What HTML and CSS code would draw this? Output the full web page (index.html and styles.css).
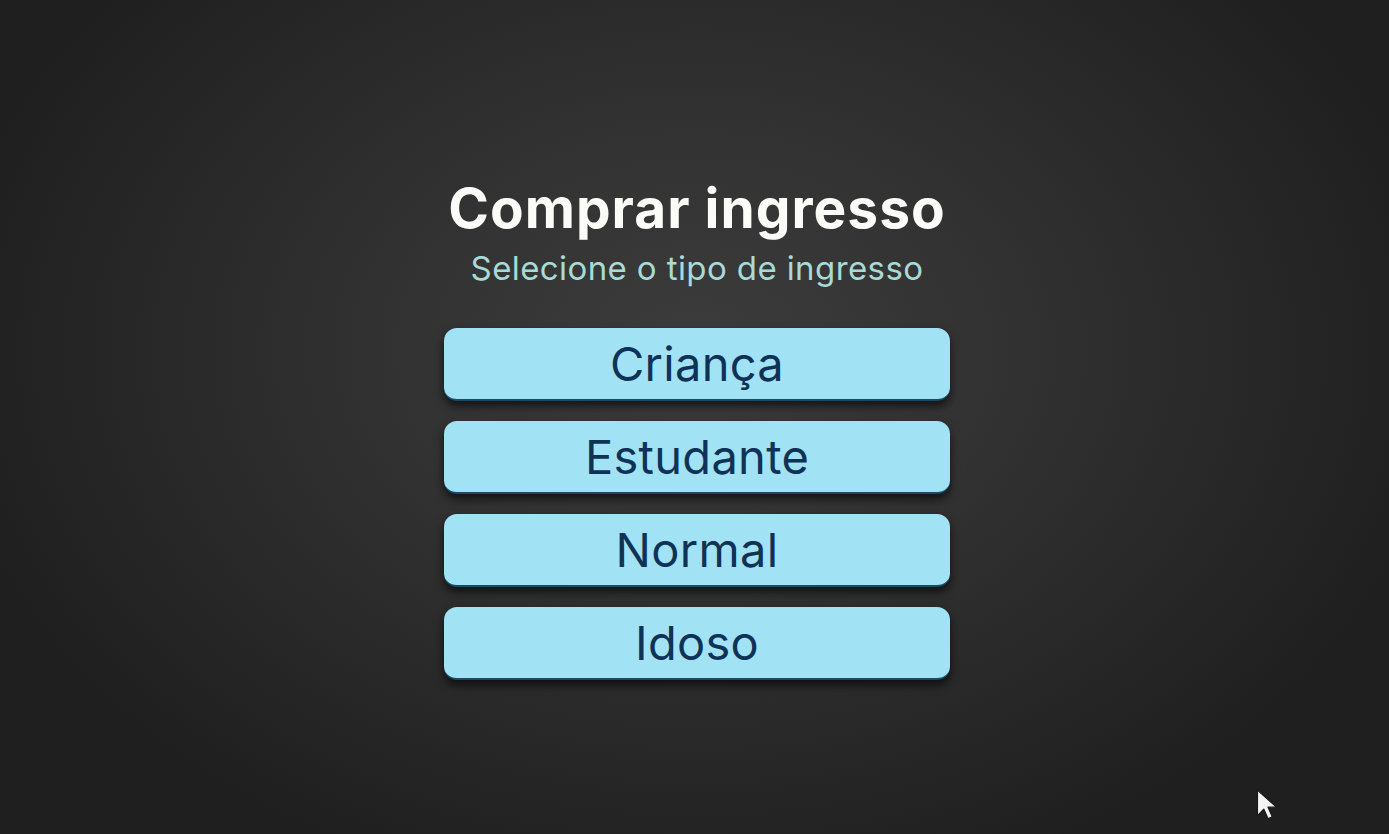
FILE: index.html
```html
<!DOCTYPE html>
<html lang="pt-BR">
<head>
<meta charset="utf-8">
<title>Comprar ingresso</title>
<link rel="stylesheet" href="styles.css">
</head>
<body>
<main class="screen">
  <section class="panel">
    <h1 class="title">Comprar ingresso</h1>
    <p class="subtitle">Selecione o tipo de ingresso</p>
    <div class="options">
      <button class="option">Criança</button>
      <button class="option">Estudante</button>
      <button class="option">Normal</button>
      <button class="option">Idoso</button>
    </div>
  </section>
  <svg class="cursor" width="24" height="34" viewBox="0 0 22 32" aria-hidden="true">
    <path d="M2 2 L2 26 L8 20 L12 29 L16 27 L12 18 L20 18 Z" fill="#f4f4f4" stroke="#1a1a1a" stroke-width="1.2" stroke-linejoin="round"/>
  </svg>
</main>
</body>
</html>
```
FILE: styles.css
```css
* { box-sizing: border-box; }
html, body { margin: 0; padding: 0; height: 100%; }
body {
  background: #1e1e1e;
  font-family: "Inter", "Lato", "Noto Sans", sans-serif;
}
.screen {
  position: relative;
  width: 1389px;
  height: 834px;
  overflow: hidden;
  background: radial-gradient(ellipse 760px 560px at 50% 42%, #3c3c3c 0%, #323232 40%, #272727 75%, #1f1f1f 100%);
  display: flex;
  justify-content: center;
}
.panel {
  padding-top: 178px;
  margin-left: 5px;
  width: 506px;
  display: flex;
  flex-direction: column;
  align-items: center;
}
.title {
  margin: 0;
  color: #fbfbf8;
  font-size: 55px;
  font-weight: 700;
  letter-spacing: 1px;
  line-height: 60px;
  white-space: nowrap;
}
.subtitle {
  margin: 10px 0 0;
  color: #a9dbd6;
  font-size: 33px;
  font-weight: 400;
  letter-spacing: 0.4px;
  line-height: 40px;
  white-space: nowrap;
}
.options {
  margin-top: 40px;
  width: 506px;
  display: flex;
  flex-direction: column;
  gap: 20px;
}
.option {
  height: 73px;
  width: 100%;
  border: none;
  border-bottom: 2px solid #1b4a66;
  border-radius: 13px;
  background: #a2e2f5;
  color: #0f3357;
  font-family: inherit;
  font-size: 47px;
  font-weight: 400;
  letter-spacing: 0.3px;
  padding: 0;
  display: flex;
  align-items: center;
  justify-content: center;
  box-shadow: 0 5px 10px rgba(0, 0, 0, 0.65);
  cursor: pointer;
}
.cursor {
  position: absolute;
  left: 1255px;
  top: 788px;
}
```
